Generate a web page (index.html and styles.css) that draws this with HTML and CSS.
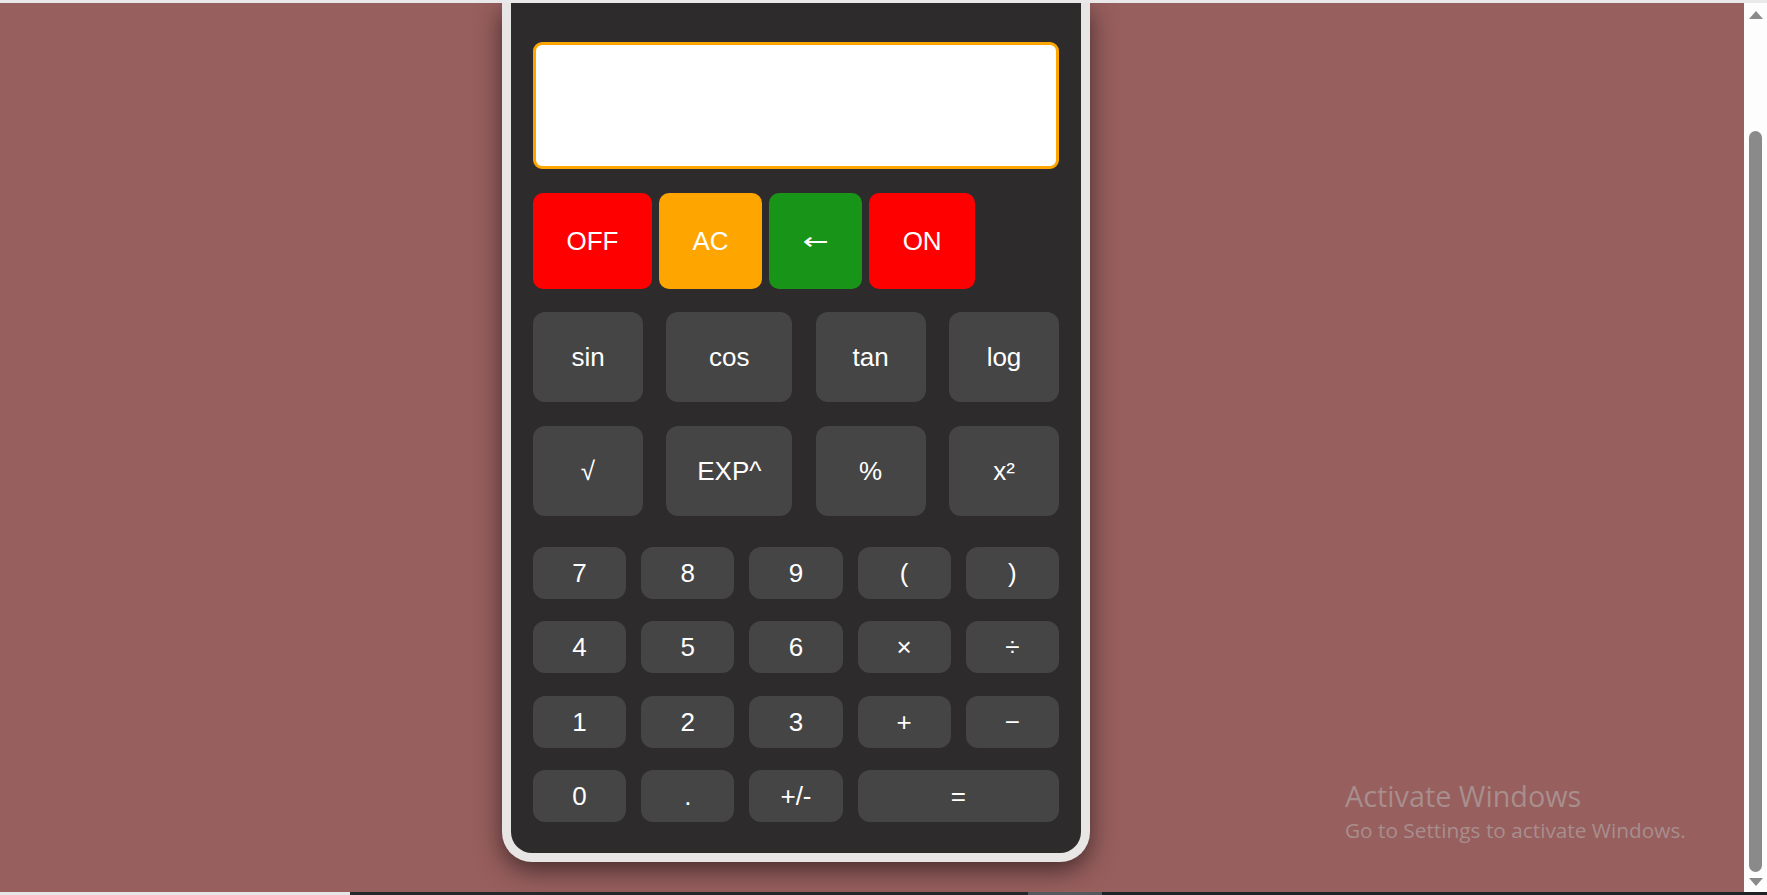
FILE: index.html
```html
<!DOCTYPE html>
<html lang="en">
<head>
<meta charset="utf-8">
<title>Calculator</title>
<link rel="stylesheet" href="styles.css">
</head>
<body>
<div class="screen">
  <div class="top-strip"></div>
  <div class="window">
    <main class="page">
      <div class="calculator">
        <div class="display"></div>
        <div class="control-row">
          <button class="key key-off">OFF</button>
          <button class="key key-ac">AC</button>
          <button class="key key-back"><span class="back-glyph">←</span></button>
          <button class="key key-on">ON</button>
        </div>
        <div class="sci-grid">
          <button class="key key-gray">sin</button>
          <button class="key key-gray">cos</button>
          <button class="key key-gray">tan</button>
          <button class="key key-gray">log</button>
          <button class="key key-gray">√</button>
          <button class="key key-gray">EXP^</button>
          <button class="key key-gray">%</button>
          <button class="key key-gray">x²</button>
        </div>
        <div class="num-grid">
          <button class="key key-gray">7</button>
          <button class="key key-gray">8</button>
          <button class="key key-gray">9</button>
          <button class="key key-gray">(</button>
          <button class="key key-gray">)</button>
          <button class="key key-gray">4</button>
          <button class="key key-gray">5</button>
          <button class="key key-gray">6</button>
          <button class="key key-gray">×</button>
          <button class="key key-gray">÷</button>
          <button class="key key-gray">1</button>
          <button class="key key-gray">2</button>
          <button class="key key-gray">3</button>
          <button class="key key-gray">+</button>
          <button class="key key-gray">−</button>
          <button class="key key-gray">0</button>
          <button class="key key-gray">.</button>
          <button class="key key-gray">+/-</button>
          <button class="key key-gray key-wide">=</button>
        </div>
      </div>
      <div class="watermark">
        <div class="wm-title">Activate Windows</div>
        <div class="wm-sub">Go to Settings to activate Windows.</div>
      </div>
    </main>
    <div class="scrollbar">
      <div class="arrow-up"></div>
      <div class="track"><div class="thumb"></div></div>
      <div class="arrow-down"></div>
    </div>
  </div>
  <div class="bottom-strip">
    <div class="bs-light"></div>
    <div class="bs-dark"></div>
    <div class="bs-mid"></div>
    <div class="bs-dark2"></div>
  </div>
</div>
</body>
</html>
```

FILE: styles.css
```css
* { box-sizing: border-box; }

html, body {
  margin: 0;
  padding: 0;
  height: 100%;
  overflow: hidden;
}

body {
  background: #975f5e;
  font-family: "Liberation Sans", Arial, sans-serif;
}

.screen {
  display: flex;
  flex-direction: column;
  height: 895px;
}

.top-strip {
  height: 3px;
  background: #e9e9e9;
  flex: none;
}

.window {
  flex: 1;
  display: flex;
  min-height: 0;
}

.page {
  flex: 1;
  position: relative;
  background: #975f5e;
  padding-left: 502px;
  overflow: hidden;
}

.calculator {
  width: 588px;
  background: #2d2b2c;
  border: 9px solid #e8e6e4;
  border-top: 0;
  border-radius: 0 0 30px 30px;
  padding: 39px 22px 31px;
  box-shadow: 0 8px 26px rgba(0, 0, 0, 0.55);
}

.display {
  height: 127px;
  background: #ffffff;
  border: 3px solid #ffa500;
  border-radius: 9px;
  margin-bottom: 24px;
}

.key {
  border: none;
  margin: 0;
  color: #ffffff;
  font-family: "Liberation Sans", Arial, sans-serif;
  font-size: 26px;
  line-height: 1;
  display: flex;
  align-items: center;
  justify-content: center;
  cursor: pointer;
}

.control-row {
  display: flex;
  gap: 7px;
  margin-bottom: 23px;
}

.control-row .key {
  height: 96px;
  padding: 0 33.5px;
  border-radius: 10px;
}

.key-off, .key-on { background: #ff0000; }
.key-ac { background: #ffa500; }
.key-back { background: #189418; }

.back-glyph {
  font-family: "DejaVu Sans", sans-serif;
  font-size: 31px;
  line-height: 26px;
  display: block;
  width: 26px;
  text-align: center;
  transform: scaleY(0.75);
}

.key-gray {
  background: #454545;
  border-radius: 12px;
  padding: 0;
}

.sci-grid {
  display: grid;
  grid-template-columns: 110px 126px 110px 110px;
  grid-auto-rows: 90px;
  justify-content: space-between;
  row-gap: 24px;
  margin-bottom: 31px;
}

.num-grid {
  display: grid;
  grid-template-columns: repeat(5, 1fr);
  grid-auto-rows: 52px;
  column-gap: 15px;
  row-gap: 22.4px;
}

.key-wide { grid-column: span 2; }

.watermark {
  position: absolute;
  left: 1345px;
  top: 775px;
  color: #a88e8d;
  font-family: "Open Sans", "Noto Sans", sans-serif;
}

.wm-title {
  font-size: 28.8px;
  line-height: 36px;
}

.wm-sub {
  font-size: 20.8px;
  line-height: 28px;
  margin-top: 2px;
}

.scrollbar {
  width: 23px;
  flex: none;
  background: #fdfdfd;
  display: flex;
  flex-direction: column;
  align-items: center;
  padding: 8px 0 6px;
}

.arrow-up {
  width: 0;
  height: 0;
  border-left: 7px solid transparent;
  border-right: 7px solid transparent;
  border-bottom: 8px solid #8a8a8a;
  flex: none;
}

.track {
  flex: 1;
  width: 100%;
  display: flex;
  justify-content: center;
  padding: 112px 0 6px;
}

.thumb {
  width: 13px;
  height: 100%;
  background: #8a8a8a;
  border-radius: 7px;
}

.arrow-down {
  width: 0;
  height: 0;
  border-left: 7px solid transparent;
  border-right: 7px solid transparent;
  border-top: 8px solid #8a8a8a;
  flex: none;
}

.bottom-strip {
  height: 3px;
  flex: none;
  display: flex;
}

.bs-light { width: 350px; background: #e6e6e6; }
.bs-dark { width: 678px; background: #25272b; }
.bs-mid { width: 74px; background: #55585c; }
.bs-dark2 { flex: 1; background: #1f2326; }
```
